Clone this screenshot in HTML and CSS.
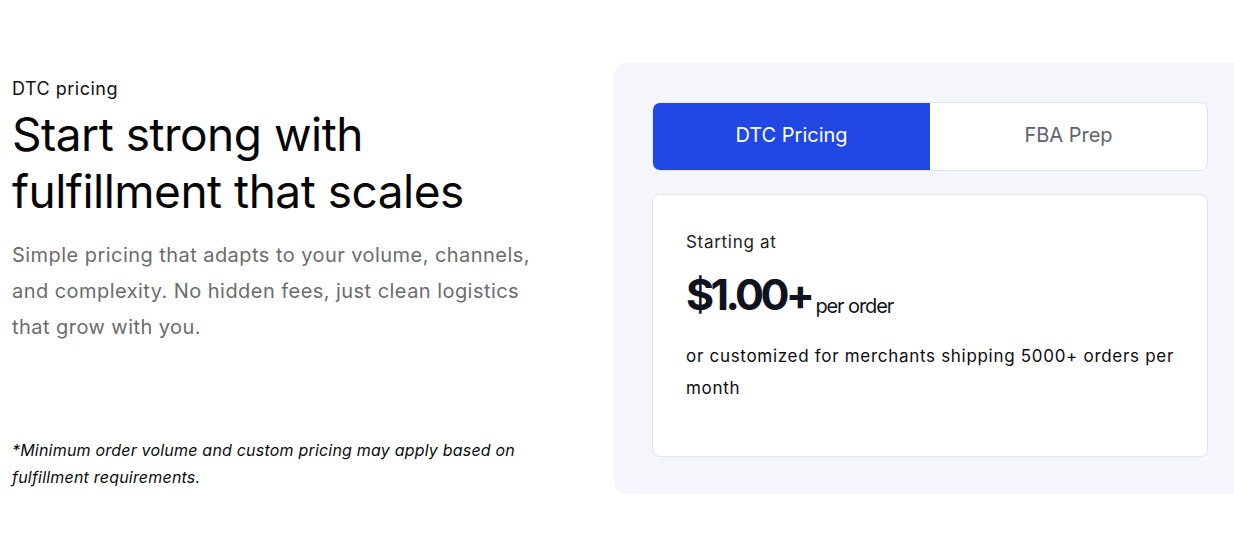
FILE: index.html
```html
<!DOCTYPE html>
<html lang="en">
<head>
<meta charset="utf-8">
<title>DTC pricing</title>
<link rel="stylesheet" href="styles.css">
</head>
<body>
<section class="pricing">
  <div class="intro">
    <div class="intro-top">
      <p class="eyebrow">DTC pricing</p>
      <h1 class="title">Start strong with<br>fulfillment that scales</h1>
      <p class="lead">Simple pricing that adapts to your volume, channels, and complexity. No hidden fees, just clean logistics that grow with you.</p>
    </div>
    <p class="note">*Minimum order volume and custom pricing may apply based on fulfillment requirements.</p>
  </div>
  <div class="panel">
    <div class="tabs">
      <button class="tab tab-active">DTC Pricing</button>
      <button class="tab">FBA Prep</button>
    </div>
    <div class="card">
      <p class="card-label">Starting at</p>
      <p class="price"><span class="price-value">$1.00+</span><span class="price-unit">per order</span></p>
      <p class="card-text">or customized for merchants shipping 5000+ orders per month</p>
    </div>
  </div>
</section>
</body>
</html>
```
FILE: styles.css
```css
* { box-sizing: border-box; }
html, body { margin: 0; padding: 0; background: #fff; }
body {
  font-family: Inter, "Noto Sans", sans-serif;
  color: #0b0b0f;
}
.pricing {
  display: flex;
  gap: 52px;
  padding: 63px 0 0 12px;
}
.intro {
  width: 550px;
  display: flex;
  flex-direction: column;
  justify-content: space-between;
  height: 431px;
  padding: 14px 0 3px;
}
.eyebrow {
  margin: 0;
  font-size: 18px;
  line-height: 24px;
  letter-spacing: 0.5px;
  color: #111;
}
.title {
  margin: 5px 0 0;
  font-weight: 400;
  font-size: 46px;
  line-height: 57px;
  letter-spacing: -0.5px;
  color: #050505;
}
.lead {
  margin: 17px 0 0;
  font-size: 20px;
  line-height: 36px;
  letter-spacing: 0.45px;
  color: #6c6c6c;
  width: 535px;
}
.note {
  margin: 0;
  font-size: 16px;
  line-height: 27px;
  letter-spacing: 0.2px;
  font-style: italic;
  color: #0b0b0b;
  width: 530px;
}
.panel {
  flex: 1;
  height: 431px;
  background: #f5f6fb;
  border-radius: 12px 0 0 12px;
  padding: 39px 26px 37px 38px;
  display: flex;
  flex-direction: column;
  gap: 23px;
}
.tabs {
  display: flex;
  height: 69px;
  background: #fff;
  border: 1px solid #e1e3ea;
  border-radius: 8px;
  overflow: hidden;
}
.tab {
  flex: 1;
  border: 0;
  background: transparent;
  font-family: inherit;
  font-size: 20px;
  color: #5f6370;
  padding: 0 0 3px;
  cursor: pointer;
}
.tab-active {
  background: #2148e4;
  color: #fff;
}
.card {
  flex: 1;
  background: #fff;
  border: 1px solid #e1e3ea;
  border-radius: 8px;
  padding: 35px 33px;
}
.card-label {
  margin: 0;
  font-size: 17px;
  line-height: 24px;
  letter-spacing: 0.7px;
  color: #222;
}
.price {
  margin: 8px 0 0;
  display: flex;
  align-items: baseline;
  gap: 4px;
  line-height: 64px;
}
.price-value {
  font-size: 43px;
  font-weight: 700;
  letter-spacing: -3.6px;
  color: #0f1220;
}
.price-unit {
  font-size: 20px;
  letter-spacing: -1.1px;
  color: #0f1220;
  position: relative;
  top: 3px;
}
.card-text {
  margin: 5px 0 0;
  font-size: 17px;
  line-height: 32px;
  letter-spacing: 0.7px;
  color: #0b0b0f;
}
```
